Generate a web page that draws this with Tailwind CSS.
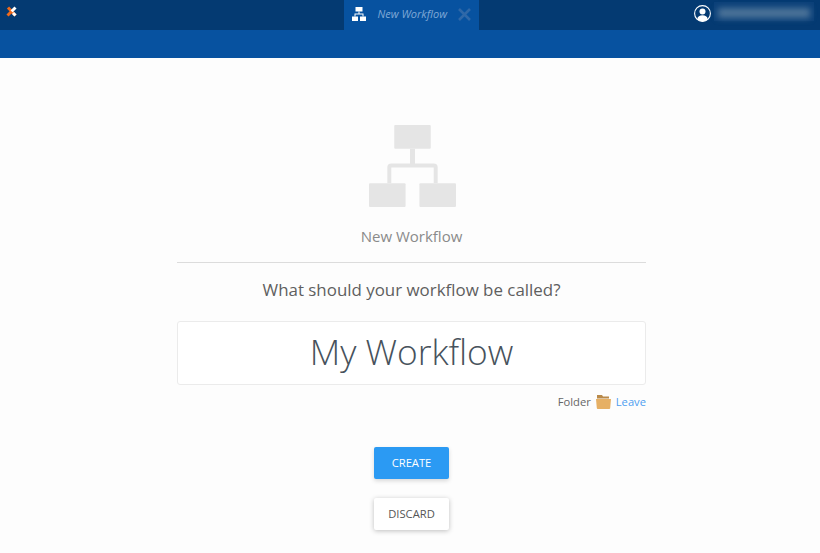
<!DOCTYPE html>
<html lang="en">
<head>
  <meta charset="UTF-8">
  <title>New Workflow</title>
  <script src="https://cdn.jsdelivr.net/npm/@tailwindcss/browser@4"></script>
</head>
<body class="bg-[#fdfdfd] h-[553px] overflow-hidden font-['Open_Sans',sans-serif]">

  <!-- Top bar -->
  <header class="h-[30px] bg-[#043a72] relative flex justify-center">
    <svg class="absolute left-[6px] top-[6px] w-[11px] h-[11px]" viewBox="0 0 11 11">
      <path d="M2 1.5 L9.5 9.5" stroke="#f26a1b" stroke-width="3"/>
      <path d="M9.5 1.5 L5.5 5.5" stroke="#ffffff" stroke-width="3"/>
      <path d="M5.5 5.5 L1.5 9.5" stroke="#f26a1b" stroke-width="3"/>
      <path d="M7 7 L9.5 9.5" stroke="#ffffff" stroke-width="3"/>
    </svg>

    <!-- Tab -->
    <div class="w-[135px] h-[30px] ml-[2px] pb-[2px] bg-[#0752a0] flex items-center pl-[8px]">
      <svg class="w-[14px] h-[14px] -mt-[1px] shrink-0" viewBox="0 0 14 14" fill="#fff">
        <rect x="3.5" y="0" width="7" height="4.5"/>
        <rect x="0" y="9.5" width="6" height="4.5"/>
        <rect x="8" y="9.5" width="6" height="4.5"/>
        <path d="M6.5 4.5h1v2h4v3h-1v-2h-7v2h-1v-3h4z"/>
      </svg>
      <span class="ml-[12px] text-[11px] italic text-[#7fa8d6] whitespace-nowrap">New Workflow</span>
      <svg class="ml-[11px] w-[13px] h-[13px] shrink-0" viewBox="0 0 13 13" stroke="#2f68a8" stroke-width="2.6">
        <path d="M1 1l11 11M12 1L1 12"/>
      </svg>
    </div>

    <!-- User -->
    <div class="absolute left-[694px] top-[5px] flex items-center">
      <svg class="w-[17px] h-[17px]" viewBox="0 0 17 17">
        <circle cx="8.5" cy="8.5" r="7.9" fill="#043a72" stroke="#fff" stroke-width="1.1"/>
        <circle cx="8.5" cy="6.5" r="3" fill="#fff"/>
        <path d="M3.2 14.2c.5-3 2.5-4 5.3-4s4.8 1 5.3 4c-1.400 1.400-3.300 2.200-5.300 2.200s-3.900-.8-5.300-2.200z" fill="#fff"/>
      </svg>
      <div class="ml-[3px] w-[100px] h-[19px] -mt-[5px] pt-[3px] bg-[#0b4079] flex items-center justify-center">
        <div class="w-[92px] h-[10px] bg-[#4d7499] blur-[3px]"></div>
      </div>
    </div>
  </header>

  <!-- Sub bar -->
  <div class="h-[28px] bg-[#0752a0]"></div>

  <!-- Form -->
  <main class="w-[469px] ml-[177px] pt-[67px] flex flex-col items-center">
    <svg class="w-[87px] h-[82px] ml-[2px]" viewBox="0 0 88 83" fill="#e5e5e5">
      <rect x="25.500" y="0" width="37" height="24" rx="1"/>
      <rect x="0" y="59" width="37" height="24" rx="1"/>
      <rect x="51" y="59" width="37" height="24" rx="1"/>
      <path d="M41.500 24h5v15h19a4 4 0 0 1 4 4v16h-4v-16h-43v16h-4v-16a4 4 0 0 1 4-4h19z"/>
    </svg>
    <p class="mt-[19px] text-[15px] leading-[20px] text-[#8a8a8a]">New Workflow</p>

    <div class="w-full mt-[16px] border-t border-[#dcdcdc]"></div>

    <h2 class="mt-[15px] text-[16.9px] leading-[24px] text-[#5f5f5f]">What should your workflow be called?</h2>

    <div class="w-full h-[64px] mt-[19px] pb-[4px] bg-white border border-[#ebebeb] rounded-[3px] flex items-center justify-center text-[35.3px] font-light text-[#47525c]">My Workflow</div>

    <div class="w-full mt-[8px] flex items-center justify-end text-[11.2px] leading-[18px]">
      <span class="text-[#666]">Folder</span>
      <svg class="ml-[5px] w-[15px] h-[14px]" viewBox="0 0 15 14">
        <path d="M1 0h5l1 1.500h6v2H1z" fill="#b98a4a"/>
        <path d="M0 4h15l-.8 9a1 1 0 0 1-1 1H1.800a1 1 0 0 1-1-1z" fill="#e6b065"/>
      </svg>
      <span class="ml-[5px] text-[#4d9df0]">Leave</span>
    </div>

    <button class="w-[75px] h-[32px] mt-[36px] bg-[#2b9af3] rounded-[2px] text-white text-[11.2px] shadow-[0_2px_4px_rgba(0,0,0,0.15)]">CREATE</button>
    <button class="w-[75px] h-[32px] mt-[19px] bg-white rounded-[2px] text-[#555] text-[11.2px] shadow-[0_1px_5px_rgba(0,0,0,0.25)]">DISCARD</button>
  </main>
</body>
</html>
